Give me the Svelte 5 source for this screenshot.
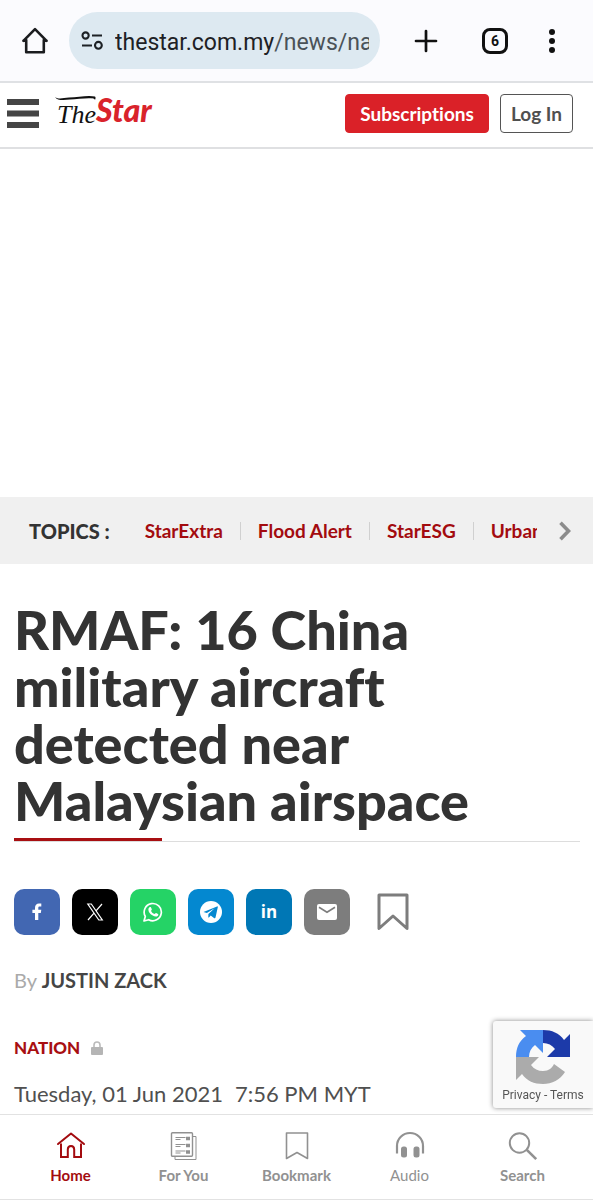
<script>
  const topics = ['StarExtra', 'Flood Alert', 'StarESG', 'Urban Rail'];
  const nav = [
    { id: 'home', label: 'Home' },
    { id: 'foryou', label: 'For You' },
    { id: 'bookmark', label: 'Bookmark' },
    { id: 'audio', label: 'Audio' },
    { id: 'search', label: 'Search' }
  ];
</script>

<div class="browser">
  <button class="tool" aria-label="Home page">
    <svg width="28" height="28" viewBox="0 0 28 28" fill="none" stroke="#1b1c1f" stroke-width="2.6" stroke-linejoin="round" stroke-linecap="round"><path d="M5.2 13v12.2h17.6V13M2.4 13.8 14 2.2l11.6 11.6M2.4 13.8h2.8M25.6 13.8h-2.8" /></svg>
  </button>
  <div class="address">
    <svg width="22" height="19" viewBox="0 0 22 19" fill="none" stroke="#1d2125" stroke-width="2.1"><circle cx="4.6" cy="4.5" r="3.1" /><path d="M11 4.500h10M1 14.500h10" /><circle cx="17.4" cy="14.3" r="3.4" /></svg>
    <div class="url"><b>thestar.com.my</b>/news/nation</div>
  </div>
  <button class="tool add" aria-label="New tab">
    <svg width="24" height="24" viewBox="0 0 24 24" stroke="#111" stroke-width="2.7" stroke-linecap="round"><path d="M12 2v20M2 12h20" /></svg>
  </button>
  <button class="tool tabs" aria-label="Open tabs"><span>6</span></button>
  <button class="tool" aria-label="Menu">
    <svg width="8" height="24" viewBox="0 0 8 24" fill="#111"><circle cx="4" cy="3" r="3" /><circle cx="4" cy="12" r="3" /><circle cx="4" cy="21" r="3" /></svg>
  </button>
</div>

<header>
  <button class="burger" aria-label="Sections">
    <svg width="32" height="29" viewBox="0 0 32 29" fill="#454545"><path d="M0 0h32v6H0zM0 11.500h32v6H0zM0 23h32v6H0z" /></svg>
  </button>
  <a class="logo" href="#top">
    <svg width="102" height="38" viewBox="0 0 102 38">
      <path d="M0 3.200C4 5.500 8 4 14 3.600 23 3 34 1 40 2.600 41 3.500 40.500 5 40 6 40 2.800 24 5 15 5.600 8 6.200 2 6.500 0 3.200Z" fill="#111" />
      <text class="the" x="2" y="29">The</text>
      <text class="star" x="41" y="28">Star</text>
    </svg>
  </a>
  <a class="btn red" href="#subscriptions">Subscriptions</a>
  <a class="btn" href="#login">Log In</a>
</header>

<div class="ad"></div>

<nav class="topics" aria-label="Topics">
  <strong>TOPICS&nbsp;:</strong>
  <ul>
    {#each topics as topic}
      <li><a href="#topic">{topic}</a></li>
    {/each}
  </ul>
  <button aria-label="More topics">
    <svg width="12" height="20" viewBox="0 0 12 20" fill="none" stroke="#8c8c8c" stroke-width="3.600"><path d="m1.500 1.800 8 8.200-8 8.200" /></svg>
  </button>
</nav>

<main>
  <h1>RMAF: 16 China military aircraft detected near Malaysian airspace</h1>
  <div class="rule"></div>
  <div class="share">
    <a class="fb" href="#fb" aria-label="Facebook"><svg width="20" height="20" viewBox="0 0 20 20" fill="#fff"><path d="M8 18v-7H5.400V7.800H8V6c0-3 1.500-4.500 4-4.500h2.300v3h-1.600c-1 0-1.400.5-1.400 1.400v1.900h3l-.5 3.200h-2.500v7Z" /></svg></a>
    <a class="x" href="#x" aria-label="X"><svg width="20" height="20" viewBox="0 0 20 20" fill="none" stroke="#fff" stroke-width="1.200"><path d="M2.800 2h3.500l11 16h-3.500ZM17 2l-6.200 7.100M9 11.200 3 18" /></svg></a>
    <a class="wa" href="#wa" aria-label="WhatsApp"><svg width="20" height="20" viewBox="0 0 20 20"><path d="m1 19 1.300-4.600A8.600 8.600 0 1 1 5.700 17.700Z" fill="none" stroke="#fff" stroke-width="1.700" stroke-linejoin="round" /><path d="M6.500 5.300c.5-.5 1.200-.5 1.500.1l.8 1.900c.2.600-.8 1.200-.7 1.700.7 1.500 1.900 2.500 3.400 3 .6 0 1-1.200 1.600-1l1.900.9c.7.400.2 1.600-.4 2.100-1.200 1-3.100.7-5.300-.7C7 12 5.300 9.500 5.400 7.400c0-.8.500-1.600 1.100-2.100Z" fill="#fff" /></svg></a>
    <a class="tg" href="#tg" aria-label="Telegram"><svg width="24" height="24" viewBox="0 0 24 24"><circle cx="12" cy="12" r="11" fill="#fff" /><path d="m4.500 12 13.500-5.600c.6-.2.900.1.800.8L16.500 17.600c-.2.800-.6.900-1.200.6l-3.600-2.600-1.800 1.800c-.3.300-.6.200-.6-.2l.1-3.300 6.200-5.700-7.700 4.900-3.400-1.100Z" fill="#0488d0" /></svg></a>
    <a class="li" href="#li" aria-label="LinkedIn"><span>in</span></a>
    <a class="ml" href="#mail" aria-label="Email"><svg width="20" height="16" viewBox="0 0 20 16"><rect width="20" height="16" rx="2" fill="#fff" /><path d="m2 3.200 8 5 8-5" fill="none" stroke="#7d7d7d" stroke-width="1.600" /></svg></a>
    <button aria-label="Save article"><svg width="32" height="38" viewBox="0 0 32 38" fill="none" stroke="#7d7d7d" stroke-width="3" stroke-linejoin="round"><path d="M2 2h28v33.500L16 23 2 35.500Z" /></svg></button>
  </div>
  <p class="by">By <a href="#author">JUSTIN ZACK</a></p>
  <p class="section">
    <a href="#nation">NATION</a>
    <svg width="12" height="14" viewBox="0 0 12 14"><path d="M3 7V4a3 3 0 0 1 6 0v3" fill="none" stroke="#bbb" stroke-width="1.600" /><rect y="6" width="12" height="8" rx="1" fill="#b5b5b5" /></svg>
  </p>
  <p class="date"><span>Tuesday, 01 Jun 2021</span><span>7:56 PM MYT</span></p>
</main>

<aside class="captcha">
  <svg width="56" height="56" viewBox="0 0 56 56">
    <path d="M1 28C1 19 4 12 11 7L5 1H28V24L20 16C16 19 14 23 14 28Z" fill="#4a8df0" />
    <path d="M28 1C37 1 44 4 49 11L55 5V28H32L40 20C37 16 33 14 28 14Z" fill="#1c3aa9" />
    <path d="M28 55C19 55 12 52 7 45L1 51V28H24L16 36C19 40 23 42 28 42 34 42 37 39 39 35L50 43C45 51 37 55 28 55Z" fill="#ababab" />
  </svg>
  <p><a href="#privacy">Privacy</a> - <a href="#terms">Terms</a></p>
</aside>

<nav class="bottom" aria-label="Main">
  {#each nav as item}
    <a href="#{item.id}" class={item.id}>
      <svg width="30" height="30" viewBox="0 0 30 30" fill="none" stroke="currentColor" stroke-width="1.600">
        {#if item.id === 'home'}
          <path d="M2 13 15 2.500 28 13" stroke-width="2" stroke-linecap="round" stroke-linejoin="round" /><path d="M5 12.500V26h6.800v-7.500c0-4.700 6.400-4.700 6.400 0V26H25V12.500" stroke-width="2" />
        {:else if item.id === 'foryou'}
          <path d="M24 5.500h3v23H6v-3" stroke-width="1" /><rect x="2.500" y="1.800" width="21" height="23.500" rx="1" stroke-width="1.400" /><path d="M6.500 6.500h10M6.500 8.500h5M6.500 13.500h10M6.500 15.500h5M6.500 20h10M6.500 22h5" stroke-width="1.200" /><path d="M17 7.500h4M17 14.500h4M17 21h4" stroke-width="3.600" />
        {:else if item.id === 'bookmark'}
          <path d="M4.500 2h21v25.500L15 21.500 4.500 27.500Z" stroke-linejoin="round" />
        {:else if item.id === 'audio'}
          <path d="M2 22.500V15a13 13 0 0 1 26 0v7.500" stroke-width="2.200" /><rect x="6" y="15.500" width="6" height="11" rx="2.500" fill="currentColor" stroke="none" /><rect x="18.500" y="15.500" width="6" height="11" rx="2.500" fill="currentColor" stroke="none" />
        {:else}
          <circle cx="11.500" cy="12" r="9.700" stroke-width="2" /><path d="m18.800 18.800 9.400 9.400" stroke-width="2.600" />
        {/if}
      </svg>
      <span>{item.label}</span>
    </a>
  {/each}
</nav>

<style>
  :global(body) { margin: 0; background: #fff; font-family: Lato, "Liberation Sans", sans-serif; color: #454545; font-variant-ligatures: none; }
  a { color: inherit; text-decoration: none; }
  button { border: 0; padding: 0; background: none; font: inherit; color: inherit; display: flex; }
  svg { display: block; flex: none; }
  p, h1, ul { margin: 0; padding: 0; }

  .browser { display: flex; align-items: center; height: 81px; padding: 0 37px 0 21px; background: #fbfbfe; border-bottom: 2px solid #dfe1e4; }
  .address { flex: 1; min-width: 0; display: flex; align-items: center; gap: 12px; height: 57px; margin: 0 34px 0 20px; padding: 0 11px 0 12px; border-radius: 29px; background: #dde9f1; }
  .url { flex: 1; min-width: 0; overflow: hidden; white-space: nowrap; padding-top: 4px; font: 23px/32px Roboto, sans-serif; color: #4a5258; }
  .url b { font-weight: 400; color: #1d2125; }
  .tabs { margin: 0 40px 0 44px; width: 26px; height: 26px; box-sizing: border-box; border: 3px solid #111; border-radius: 8px; align-items: center; justify-content: center; font: 700 14px/16px Roboto, sans-serif; color: #111; }

  header { display: flex; align-items: center; gap: 11px; height: 60px; padding: 0 20px 4px 7px; border-bottom: 2px solid #dfe0e2; }
  .logo { margin: 0 auto 0 5px; }
  .logo svg { overflow: visible; }
  .the { font: italic 26px "Liberation Serif", serif; fill: #111; }
  .star { font: italic 900 32px Lato, sans-serif; fill: #d9232b; }
  .btn { box-sizing: border-box; height: 39px; padding: 0 10px; border: 1px solid #555; border-radius: 4px; font-size: 19px; line-height: 37px; font-weight: 700; color: #505050; }
  .btn.red { padding: 0 14px; background: #da2128; border-color: #da2128; color: #fff; }
  .ad { height: 348px; }

  .topics { display: flex; align-items: center; height: 67px; padding: 0 22px 0 29px; background: #f0f0f0; }
  .topics strong { font-size: 20px; line-height: 24px; font-weight: 900; color: #333; }
  .topics ul { flex: 1; min-width: 0; display: flex; list-style: none; overflow: hidden; margin: 0 22px 0 35px; }
  .topics li { flex: none; display: flex; align-items: center; font-size: 19px; line-height: 24px; font-weight: 700; color: #a30b0f; }
  .topics li + li::before { content: ""; width: 1px; height: 18px; margin: 0 17px; background: #d0d0d0; }

  main { padding: 37px 13px 100px 14px; }
  h1 { max-width: 500px; font-size: 54px; line-height: 57px; font-weight: 900; color: #333; }
  .rule { height: 3px; margin-top: 9px; border-bottom: 1px solid #ddd; background: linear-gradient(#a80f12, #a80f12) 0 0 / 148px 3px no-repeat; }
  .share { display: flex; align-items: center; gap: 12px; margin-top: 47px; }
  .share a { display: flex; align-items: center; justify-content: center; width: 46px; height: 46px; border-radius: 10px; }
  .share button { margin-left: 15px; }
  .fb { background: #4267b2; }
  .x { background: #000; }
  .wa { background: #25d366; }
  .tg { background: #0488d0; }
  .li { background: #0077b5; color: #fff; font: 700 17px/20px "Open Sans", sans-serif; }
  .ml { background: #7d7d7d; }
  .by { margin-top: 33px; font-size: 20px; line-height: 24px; color: #aaa; }
  .by a { font-weight: 700; color: #454545; }
  .section { display: flex; align-items: center; gap: 11px; margin-top: 45px; font-size: 17px; line-height: 22px; font-weight: 900; color: #a80f12; }
  .date { display: flex; gap: 12px; margin-top: 21px; font-size: 22px; line-height: 28px; color: #505050; }

  .captcha { position: fixed; right: 0; bottom: 92px; width: 100px; height: 87px; box-sizing: border-box; padding-top: 8px; display: flex; flex-direction: column; align-items: center; background: #f9f9f9; border-radius: 3px 0 0 3px; box-shadow: 0 0 5px #888; }
  .captcha p { padding-top: 1px; font: 12px/18px Roboto, sans-serif; color: #555; }
  .bottom { position: fixed; left: 0; right: 0; bottom: 0; display: flex; padding: 16px 14px 14px; background: #fff; border-top: 1px solid #e2e2e2; border-bottom: 1px solid #e2e2e2; }
  .bottom a { flex: 1; display: flex; flex-direction: column; align-items: center; gap: 4px; font-size: 15px; line-height: 20px; font-weight: 700; color: #919191; }
  .bottom .home { color: #a30b0f; }
  .bottom .audio { font-weight: 400; }
</style>
